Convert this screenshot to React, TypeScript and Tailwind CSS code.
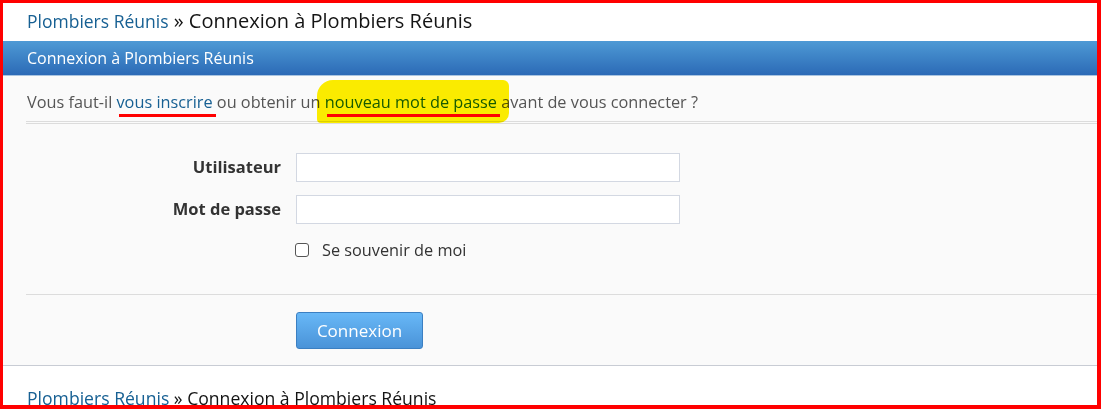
import React from "react";

export default function App() {
  return (
    <div
      className="relative w-[1101px] h-[409px] overflow-hidden bg-white border-l-[3px] border-t-[3px] border-r-[4px] border-b-[4px] border-[#ff0000]"
      style={{ fontFamily: '"Open Sans", "Liberation Sans", sans-serif' }}
    >
      {/* top breadcrumb */}
      <div className="h-[38px] flex items-center pl-6 pb-[2px] whitespace-pre">
        <a className="text-[17.5px] text-[#176093]">Plombiers Réunis</a>
        <span className="text-[20px] text-[#141414]"> » Connexion à Plombiers Réunis</span>
      </div>

      {/* panel */}
      <div className="bg-[#fafafa] border-b border-[#c8ccd4]">
        <div className="h-[35px] flex items-center pl-6 bg-gradient-to-b from-[#4e9ad5] to-[#2c6ab6] border-b border-[#a9c4e0]">
          <h2 className="text-[16px] text-white">Connexion à Plombiers Réunis</h2>
        </div>

        <div className="ml-[23px] h-[48px] flex items-center pl-[1px] pt-[8px] border-b-[3px] border-double border-[#dcdcdc] text-[16.3px] text-[#555] whitespace-pre">
          <span>Vous faut-il </span>
          <a className="text-[#176093]">vous inscrire</a>
          <span> ou obtenir un </span>
          <a className="text-[#176093]">nouveau mot de passe</a>
          <span> avant de vous connecter ?</span>
        </div>

        <div className="ml-[23px] pt-[29px] pb-[34px] border-b border-[#dcdcdc]">
          <div className="flex items-center h-[29px]">
            <label className="w-[270px] pr-[15px] text-right text-[16.5px] font-bold text-[#333]">Utilisateur</label>
            <input className="w-[384px] h-[29px] bg-white border border-[#d3d8e2] outline-none" />
          </div>
          <div className="flex items-center h-[29px] mt-[13px]">
            <label className="w-[270px] pr-[15px] text-right text-[16.5px] font-bold text-[#333]">Mot de passe</label>
            <input type="password" className="w-[384px] h-[29px] bg-white border border-[#d3d8e2] outline-none" />
          </div>
          <div className="flex items-center h-[20px] mt-[16px] ml-[269px]">
            <span className="w-[14px] h-[14px] rounded-[3px] border border-[#555] bg-white" />
            <span className="ml-[13px] text-[16.3px] text-[#333]">Se souvenir de moi</span>
          </div>
        </div>

        <div className="pl-[293px] pt-[17px] pb-[15px] h-[70px]">
          <button className="w-[127px] h-[37px] rounded-[3px] border border-[#3b7fc2] bg-gradient-to-b from-[#68b8f7] to-[#4a93d8] text-white text-[17px]">
            Connexion
          </button>
        </div>
      </div>

      {/* bottom breadcrumb */}
      <div className="pl-6 pt-[20px] text-[17.6px] leading-[24px] whitespace-pre">
        <a className="text-[#176093]">Plombiers Réunis</a>
        <span className="text-[#141414]"> » Connexion à Plombiers Réunis</span>
      </div>

      {/* annotations */}
      <div className="absolute left-[314px] top-[77px] w-[192px] h-[43px] bg-[#fff000] mix-blend-multiply rounded-tl-[16px] rounded-tr-[6px] rounded-bl-[4px] rounded-br-[10px]" />
      <div className="absolute left-[116px] top-[111px] w-[97px] h-[3px] bg-[#ff0000]" />
      <div className="absolute left-[324px] top-[111px] w-[173px] h-[3px] bg-[#ff0000]" />
    </div>
  );
}
